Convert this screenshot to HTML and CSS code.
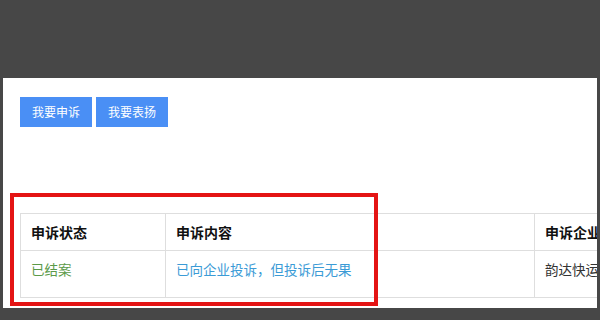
FILE: index.html
```html
<!DOCTYPE html>
<html>
<head>
<meta charset="utf-8">
<link rel="stylesheet" href="styles.css">
</head>
<body>
<div class="panel">
  <div class="actions">
    <button class="btn">我要申诉</button>
    <button class="btn">我要表扬</button>
  </div>
  <table class="grid">
    <colgroup><col class="c1"><col class="c2"><col class="c3"></colgroup>
    <thead>
      <tr><th>申诉状态</th><th>申诉内容</th><th>申诉企业</th></tr>
    </thead>
    <tbody>
      <tr><td class="st">已结案</td><td class="ct">已向企业投诉，但投诉后无果</td><td class="co">韵达快运</td></tr>
    </tbody>
  </table>
  <div class="mark"></div>
</div>
</body>
</html>
```
FILE: styles.css
```css
html, body { margin: 0; padding: 0; }
body {
  background: #474747;
  width: 600px;
  height: 320px;
  overflow: hidden;
  font-family: "Noto Sans CJK SC", "Liberation Sans", sans-serif;
}
.panel {
  position: relative;
  margin: 78px 3px 0 3px;
  height: 230px;
  background: #fff;
  overflow: hidden;
  padding: 19px 0 0 17px;
  box-sizing: border-box;
}
.actions { display: flex; gap: 4px; }
.btn {
  height: 30px;
  padding: 0 12px;
  border: 0;
  background: #4a8ff5;
  color: #fff;
  font-family: inherit;
  font-size: 12px;
  line-height: 30px;
}
.grid {
  margin-top: 86px;
  border-collapse: collapse;
  table-layout: fixed;
  width: 700px;
}
.c1 { width: 145px; }
.c2 { width: 369px; }
.c3 { width: 186px; }
.grid th, .grid td {
  border: 1px solid #dedede;
  text-align: left;
  padding: 8px 10px;
  line-height: 20px;
  vertical-align: top;
}
.grid th {
  font-size: 14px;
  font-weight: bold;
  color: #111;
}
.grid td {
  font-size: 13.5px;
  height: 30px;
}
.st { color: #5b9a48; }
.ct { color: #3b9bd6; }
.co { color: #333; }
.mark {
  position: absolute;
  left: 7px;
  top: 115px;
  width: 368px;
  height: 113px;
  border: 4px solid #e41414;
  box-sizing: border-box;
}
```
